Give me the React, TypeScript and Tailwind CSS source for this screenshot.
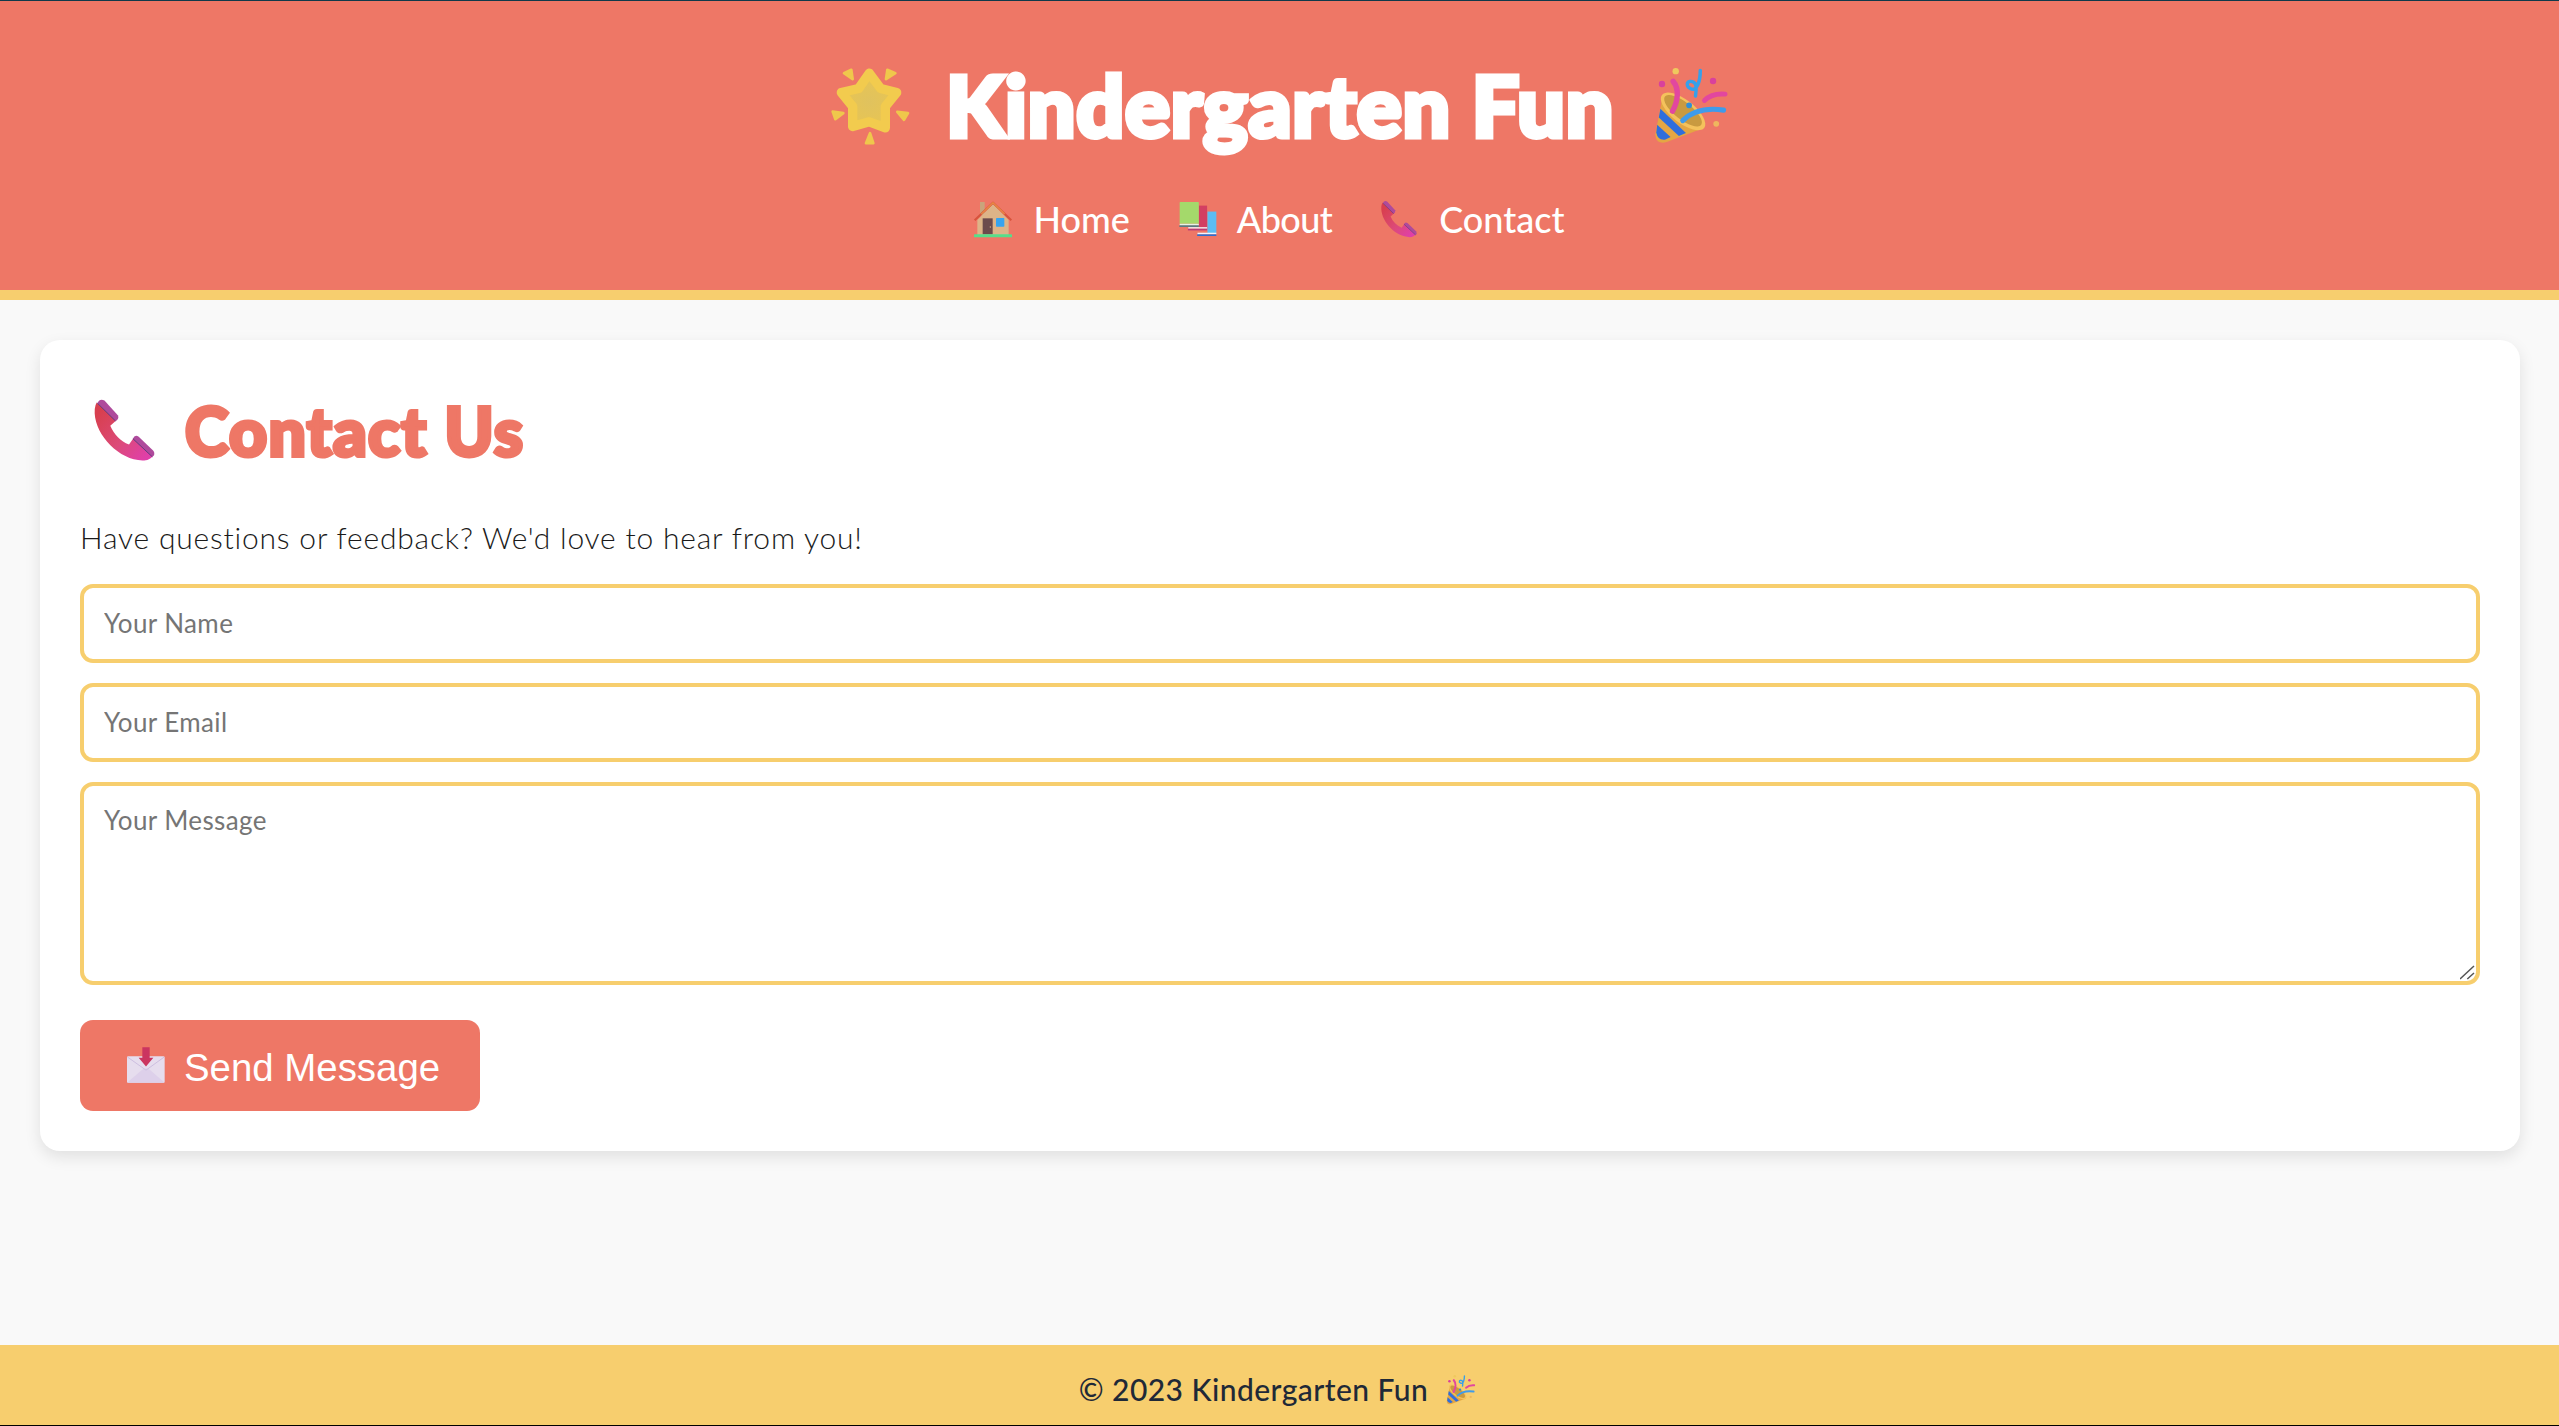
function Star({ className }: { className: string }) {
  return (
    <svg viewBox="60 50 240 235" className={className}>
      <defs>
        <radialGradient id="starFill" cx="50%" cy="52%" r="55%">
          <stop offset="0%" stopColor="#E0C25E" />
          <stop offset="70%" stopColor="#E6C455" />
          <stop offset="100%" stopColor="#F6CD4A" />
        </radialGradient>
      </defs>
      <path
        d="M178 72 L212 118 L260 130 L226 172 L226 236 L178 218 L128 232 L128 172 L94 130 L146 118 Z"
        fill="url(#starFill)"
        stroke="#F2CB4E"
        strokeWidth="28"
        strokeLinejoin="round"
      />
      <g fill="#EFC74C" stroke="#EFC74C" strokeWidth="8" strokeLinejoin="round">
        <path d="M102 72 L124 62 L128 90 Z" />
        <path d="M256 72 L232 62 L228 90 Z" />
        <path d="M68 187 L100 192 L76 210 Z" />
        <path d="M294 192 L262 188 L282 212 Z" />
        <path d="M180 252 L190 282 L168 282 Z" />
      </g>
    </svg>
  );
}

function Party({ className }: { className: string }) {
  return (
    <svg viewBox="60 42 235 248" className={className}>
      <circle cx="128" cy="60" r="10" fill="#EFC95E" />
      <circle cx="85" cy="100" r="10" fill="#D9419C" />
      <circle cx="245" cy="91" r="10" fill="#D9419C" />
      <circle cx="255" cy="225" r="9" fill="#EFB75E" />
      <path d="M218 152 C235 135 260 130 283 132" fill="none" stroke="#E2479F" strokeWidth="15" strokeLinecap="round" />
      <path d="M88 135 L64 258 Q66 292 100 282 L216 238 Z" fill="#E4A643" />
      <path d="M80 178 L160 254 L138 263 L75 205 Z" fill="#2F6EDC" />
      <path d="M70 228 L112 266 L96 274 Q72 278 67 252 Z" fill="#2F6EDC" />
      <ellipse cx="151" cy="186" rx="84" ry="36" transform="rotate(38 151 186)" fill="#F4C25C" />
      <ellipse cx="151" cy="184" rx="72" ry="27" transform="rotate(38 151 184)" fill="#C99A40" />
      <path d="M118 185 C135 155 140 115 120 92" fill="none" stroke="#E2479F" strokeWidth="17" strokeLinecap="round" />
      <path d="M150 215 C185 180 230 175 278 182" fill="none" stroke="#3F9BEA" strokeWidth="16" strokeLinecap="round" />
      <path d="M205 58 C205 90 195 125 175 115 C155 105 165 85 185 95 C195 100 192 125 190 138" fill="none" stroke="#37A0EA" strokeWidth="11" strokeLinecap="round" />
      <circle cx="170" cy="167" r="9" fill="#2F8FD8" />
    </svg>
  );
}

function House({ className }: { className: string }) {
  return (
    <svg viewBox="26 30 118 114" className={className}>
      <rect x="46" y="36" width="14" height="40" fill="#C9A47C" />
      <path d="M38 90 L85 42 L132 90 V136 H38 Z" fill="#DDB488" />
      <path d="M30 91 L85 38 L140 91" fill="none" stroke="#D8533C" strokeWidth="6" strokeLinejoin="round" />
      <path d="M50 72 L85 38 L120 72" fill="none" stroke="#E88A45" strokeWidth="4" />
      <rect x="54" y="85" width="30" height="48" fill="#6C4B4C" />
      <circle cx="77" cy="111" r="2" fill="#D9B38A" />
      <rect x="94" y="84" width="25" height="26" rx="2" fill="#36A4F0" />
      <rect x="28" y="133" width="114" height="9" rx="2" fill="#57DE8A" />
    </svg>
  );
}

function Books({ className }: { className: string }) {
  return (
    <svg viewBox="640 35 115 107" className={className}>
      <rect x="726" y="66" width="27" height="66" fill="#5CBDF2" />
      <rect x="696" y="130" width="57" height="5" fill="#F2F5FA" />
      <rect x="695" y="135" width="58" height="5" fill="#2C6FD0" />
      <rect x="700" y="48" width="25" height="68" fill="#D33F62" />
      <rect x="668" y="113" width="57" height="5" fill="#F3E6EA" />
      <rect x="667" y="118" width="58" height="5" fill="#B93A78" />
      <rect x="642" y="37" width="58" height="66" rx="2" fill="#A4D96B" />
      <rect x="642" y="103" width="58" height="5" fill="#E8F2E6" />
      <rect x="641" y="108" width="59" height="4" fill="#2E7C8C" />
    </svg>
  );
}

function Phone({ className }: { className: string }) {
  return (
    <svg viewBox="40 36 192 198" className={className}>
      <defs>
        <linearGradient id="phoneFill" x1="10%" y1="15%" x2="90%" y2="90%">
          <stop offset="0%" stopColor="#D83F4F" />
          <stop offset="55%" stopColor="#DC4A78" />
          <stop offset="100%" stopColor="#E03FA8" />
        </linearGradient>
      </defs>
      <path
        d="M50 50 L112 104 L92 122 C104 150 124 170 150 180 L164 160 L226 212 C216 228 198 232 178 228 C108 218 38 140 44 70 Q45 58 50 50 Z"
        fill="url(#phoneFill)"
      />
      <path d="M52 52 Q60 36 74 44 L116 90 Q120 102 108 107 Z" fill="#AE4A9C" />
      <path d="M162 162 Q168 148 180 156 L226 200 Q232 212 222 218 Z" fill="#AE4A9C" />
      <path d="M52 52 L108 107" stroke="#4B3A78" strokeWidth="2.5" />
      <path d="M162 162 L222 218" stroke="#4B3A78" strokeWidth="2.5" />
    </svg>
  );
}

function Inbox({ className }: { className: string }) {
  return (
    <svg viewBox="22 30 114 110" className={className}>
      <rect x="22" y="57" width="113" height="80" rx="4" fill="#E6DDEE" />
      <path d="M22 137 L72 94 L86 94 L135 137 Z" fill="#DDD0EA" />
      <path d="M24 60 L79 99 L133 60" fill="none" stroke="#CDBFE0" strokeWidth="3" />
      <path d="M68 30 H90 V62 H101 L79 88 L57 62 H68 Z" fill="#CB3560" />
    </svg>
  );
}

const fieldClass =
  "w-full h-[79px] rounded-[13px] border-4 border-[#F7CE6E] bg-white px-[20px] font-['Lato'] text-[26px] tracking-[0.4px] text-[#333] outline-none placeholder:text-[#757575]";

export default function App() {
  return (
    <div className="flex min-h-screen flex-col bg-[#F9F9F9] font-['Lato']">
      <header className="h-[300px] border-t border-[#10394A] border-b-[10px] border-b-[#F7CE6E] bg-[#EE7766]">
        <div className="mt-[54px] flex h-[100px] items-center justify-center">
          <Star className="h-[80px] w-[80px]" />
          <h1 className="ml-[36px] mr-[40px] text-[84px] leading-[100px] font-black tracking-[0.8px] text-white [-webkit-text-stroke:5px_white]">
            Kindergarten Fun
          </h1>
          <Party className="h-[80px] w-[75px]" />
        </div>
        <nav className="mt-[44px] flex h-[40px] items-center justify-center pr-[22px] text-[36px] font-medium text-white">
          <House className="h-[38px] w-[40px]" />
          <a className="ml-[21px] mr-[49px]">Home</a>
          <Books className="h-[36px] w-[38px]" />
          <a className="ml-[20px] mr-[48px] tracking-[-0.6px]">About</a>
          <Phone className="h-[38px] w-[38px]" />
          <a className="ml-[21px]">Contact</a>
        </nav>
      </header>

      <main className="flex-1 pt-[40px] pr-[39px] pl-[40px]">
        <section className="rounded-[20px] bg-white p-[40px] shadow-[0_6px_16px_rgba(0,0,0,0.1)]">
          <h2 className="flex h-[100px] items-center pl-[12px] text-[66px] font-black text-[#EE7766] [-webkit-text-stroke:4px_#EE7766]">
            <Phone className="h-[64px] w-[65px]" />
            <span className="ml-[28px] tracking-[1.3px]">Contact Us</span>
          </h2>
          <p className="mt-[37px] mb-[27px] text-[30px] leading-[40px] font-light tracking-[0.8px] text-[#1A1A1A]">
            Have questions or feedback? We'd love to hear from you!
          </p>
          <form className="flex flex-col items-start">
            <input type="text" placeholder="Your Name" className={`${fieldClass} pb-[2px]`} />
            <input type="email" placeholder="Your Email" className={`${fieldClass} mt-[20px] pb-[2px]`} />
            <div className="relative mt-[20px] w-full">
              <textarea
                placeholder="Your Message"
                className={`${fieldClass} block !h-[203px] resize-none pt-[18px] leading-[32px]`}
              />
              <svg viewBox="0 0 16 16" className="pointer-events-none absolute right-[4px] bottom-[4px] h-[16px] w-[16px]">
                <path d="M0 14 L14 1 M7.3 14 L14 8" stroke="#555" strokeWidth="1.5" fill="none" />
              </svg>
            </div>
            <button
              type="button"
              className="mt-[35px] flex h-[91px] w-[400px] items-center rounded-[13px] bg-[#EE7766] pl-[47px] font-['Liberation_Sans'] text-[38.4px] text-white"
            >
              <Inbox className="h-[37px] w-[38px]" />
              <span className="ml-[19px] pt-[5px]">Send Message</span>
            </button>
          </form>
        </section>
      </main>

      <footer className="flex h-[81px] items-center justify-center border-b border-black bg-[#F7CE6E] pt-[8px] pr-[4px] text-[30px] font-medium tracking-[0.45px] text-[#1F2937]">
        <span>© 2023 Kindergarten Fun</span>
        <Party className="ml-[18px] h-[31px] w-[30px]" />
      </footer>
    </div>
  );
}
